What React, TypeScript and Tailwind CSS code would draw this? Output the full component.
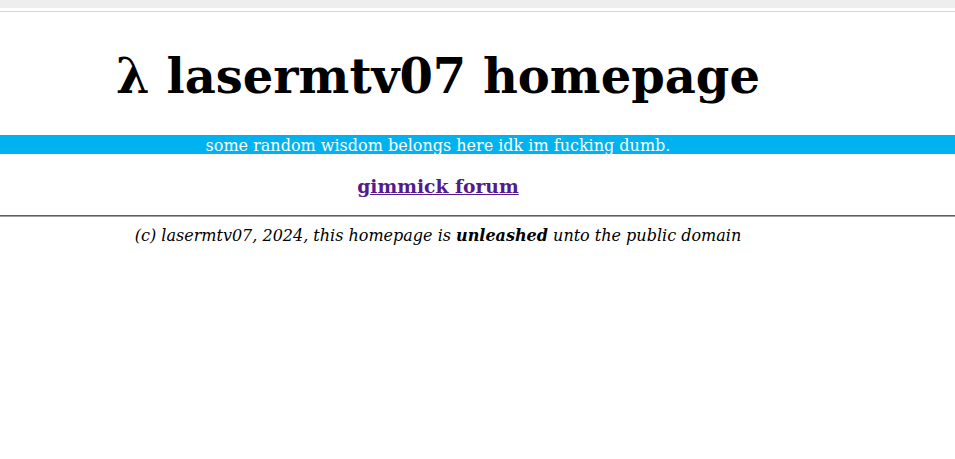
export default function App() {
  return (
    <div className="min-h-screen bg-white text-black font-['DejaVu_Serif',serif]">
      <div className="h-2 bg-[#eeeeee]" />
      <div className="mt-[3px] h-px bg-[#d6d6d6]" />

      <div className="w-[876px] text-center">
        <h1 className="pt-[36px] text-[48px] font-bold leading-[56px]">λ lasermtv07 homepage</h1>
      </div>

      <div className="mt-[31px] h-[19px] overflow-hidden bg-[#00b3f0]">
        <p className="w-[876px] pt-px text-center text-base leading-[19px] text-white">
          some random wisdom belongs here idk im fucking dumb.
        </p>
      </div>

      <div className="w-[876px] pt-[20px] text-center">
        <a href="#" className="text-[18.72px] font-bold leading-[24px] text-[#551a8b] underline">
          gimmick forum
        </a>
      </div>

      <hr className="mt-[15px] border-t border-b border-t-[#5f5f5f] border-b-[#a0a0a0]" />

      <p className="w-[876px] pt-[9px] text-center text-base italic leading-[20px]">
        (c) lasermtv07, 2024, this homepage is <b>unleashed</b> unto the public domain
      </p>
    </div>
  );
}
